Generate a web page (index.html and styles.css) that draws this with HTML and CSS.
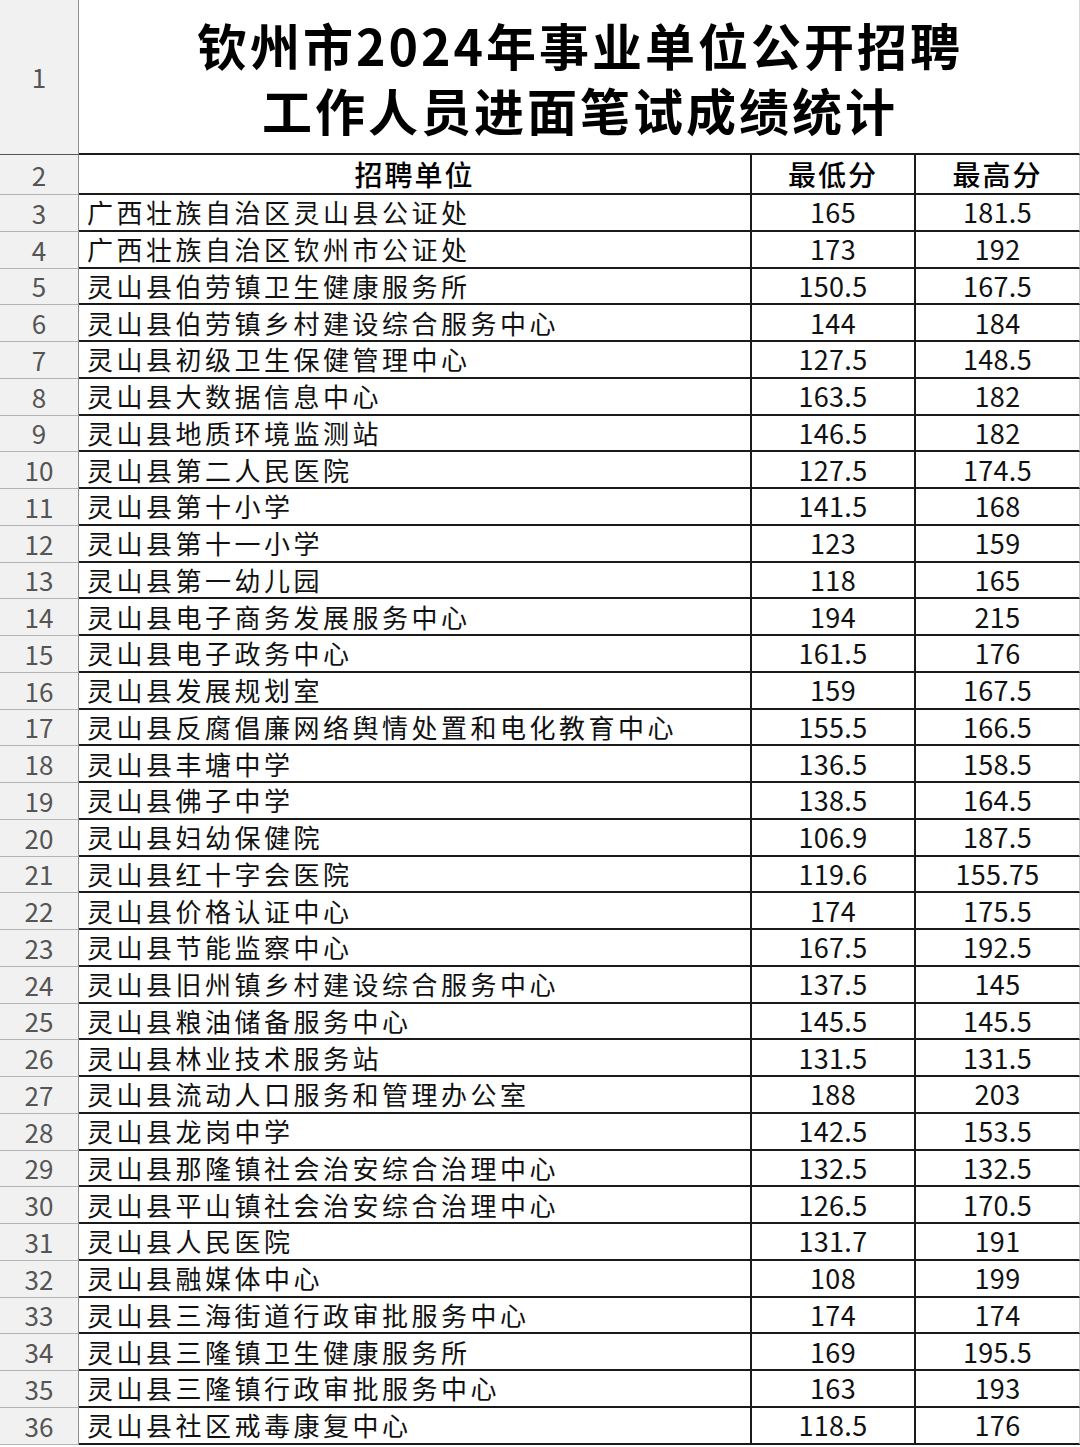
FILE: index.html
```html
<!DOCTYPE html>
<html lang="zh-CN">
<head>
<meta charset="utf-8">
<title>钦州市2024年事业单位公开招聘工作人员进面笔试成绩统计</title>
<link rel="stylesheet" href="styles.css">
</head>
<body>
<div class="sheet">
  <div class="rn rn-title">1</div>
  <div class="title">钦州市2024年事业单位公开招聘<br>工作人员进面笔试成绩统计</div>

  <div class="rn rn-head">2</div>
  <div class="hd name-h">招聘单位</div>
  <div class="hd">最低分</div>
  <div class="hd last">最高分</div>

  <div class="rn">3</div><div class="c name">广西壮族自治区灵山县公证处</div><div class="c num">165</div><div class="c num last">181.5</div>
  <div class="rn">4</div><div class="c name">广西壮族自治区钦州市公证处</div><div class="c num">173</div><div class="c num last">192</div>
  <div class="rn">5</div><div class="c name">灵山县伯劳镇卫生健康服务所</div><div class="c num">150.5</div><div class="c num last">167.5</div>
  <div class="rn">6</div><div class="c name">灵山县伯劳镇乡村建设综合服务中心</div><div class="c num">144</div><div class="c num last">184</div>
  <div class="rn">7</div><div class="c name">灵山县初级卫生保健管理中心</div><div class="c num">127.5</div><div class="c num last">148.5</div>
  <div class="rn">8</div><div class="c name">灵山县大数据信息中心</div><div class="c num">163.5</div><div class="c num last">182</div>
  <div class="rn">9</div><div class="c name">灵山县地质环境监测站</div><div class="c num">146.5</div><div class="c num last">182</div>
  <div class="rn">10</div><div class="c name">灵山县第二人民医院</div><div class="c num">127.5</div><div class="c num last">174.5</div>
  <div class="rn">11</div><div class="c name">灵山县第十小学</div><div class="c num">141.5</div><div class="c num last">168</div>
  <div class="rn">12</div><div class="c name">灵山县第十一小学</div><div class="c num">123</div><div class="c num last">159</div>
  <div class="rn">13</div><div class="c name">灵山县第一幼儿园</div><div class="c num">118</div><div class="c num last">165</div>
  <div class="rn">14</div><div class="c name">灵山县电子商务发展服务中心</div><div class="c num">194</div><div class="c num last">215</div>
  <div class="rn">15</div><div class="c name">灵山县电子政务中心</div><div class="c num">161.5</div><div class="c num last">176</div>
  <div class="rn">16</div><div class="c name">灵山县发展规划室</div><div class="c num">159</div><div class="c num last">167.5</div>
  <div class="rn">17</div><div class="c name">灵山县反腐倡廉网络舆情处置和电化教育中心</div><div class="c num">155.5</div><div class="c num last">166.5</div>
  <div class="rn">18</div><div class="c name">灵山县丰塘中学</div><div class="c num">136.5</div><div class="c num last">158.5</div>
  <div class="rn">19</div><div class="c name">灵山县佛子中学</div><div class="c num">138.5</div><div class="c num last">164.5</div>
  <div class="rn">20</div><div class="c name">灵山县妇幼保健院</div><div class="c num">106.9</div><div class="c num last">187.5</div>
  <div class="rn">21</div><div class="c name">灵山县红十字会医院</div><div class="c num">119.6</div><div class="c num last">155.75</div>
  <div class="rn">22</div><div class="c name">灵山县价格认证中心</div><div class="c num">174</div><div class="c num last">175.5</div>
  <div class="rn">23</div><div class="c name">灵山县节能监察中心</div><div class="c num">167.5</div><div class="c num last">192.5</div>
  <div class="rn">24</div><div class="c name">灵山县旧州镇乡村建设综合服务中心</div><div class="c num">137.5</div><div class="c num last">145</div>
  <div class="rn">25</div><div class="c name">灵山县粮油储备服务中心</div><div class="c num">145.5</div><div class="c num last">145.5</div>
  <div class="rn">26</div><div class="c name">灵山县林业技术服务站</div><div class="c num">131.5</div><div class="c num last">131.5</div>
  <div class="rn">27</div><div class="c name">灵山县流动人口服务和管理办公室</div><div class="c num">188</div><div class="c num last">203</div>
  <div class="rn">28</div><div class="c name">灵山县龙岗中学</div><div class="c num">142.5</div><div class="c num last">153.5</div>
  <div class="rn">29</div><div class="c name">灵山县那隆镇社会治安综合治理中心</div><div class="c num">132.5</div><div class="c num last">132.5</div>
  <div class="rn">30</div><div class="c name">灵山县平山镇社会治安综合治理中心</div><div class="c num">126.5</div><div class="c num last">170.5</div>
  <div class="rn">31</div><div class="c name">灵山县人民医院</div><div class="c num">131.7</div><div class="c num last">191</div>
  <div class="rn">32</div><div class="c name">灵山县融媒体中心</div><div class="c num">108</div><div class="c num last">199</div>
  <div class="rn">33</div><div class="c name">灵山县三海街道行政审批服务中心</div><div class="c num">174</div><div class="c num last">174</div>
  <div class="rn">34</div><div class="c name">灵山县三隆镇卫生健康服务所</div><div class="c num">169</div><div class="c num last">195.5</div>
  <div class="rn">35</div><div class="c name">灵山县三隆镇行政审批服务中心</div><div class="c num">163</div><div class="c num last">193</div>
  <div class="rn">36</div><div class="c name">灵山县社区戒毒康复中心</div><div class="c num">118.5</div><div class="c num last">176</div>
</div>
</body>
</html>
```

FILE: styles.css
```css
html, body {
  margin: 0;
  padding: 0;
  background: #ffffff;
}

body {
  font-family: "Noto Sans CJK SC", "Noto Sans", sans-serif;
  color: #111111;
}

.sheet {
  display: grid;
  width: 1080px;
  grid-template-columns: 79px 673px 164px 164px;
  grid-template-rows: 155px 40px;
  grid-auto-rows: 36.76px;
}

.rn {
  box-sizing: border-box;
  background: #f1f1f1;
  color: #555555;
  border-right: 1.5px solid #8e8e8e;
  border-bottom: 1px solid #b4b4b4;
  display: flex;
  align-items: center;
  justify-content: center;
  font-size: 26px;
  line-height: 30px;
}

.rn-title {
  border-bottom: 1.5px solid #555555;
}

.title {
  grid-column: 2 / 5;
  box-sizing: border-box;
  border-bottom: 2px solid #1a1a1a;
  border-right: 1px solid #d6d6d6;
  display: flex;
  align-items: center;
  justify-content: center;
  text-align: center;
  font-size: 50px;
  font-weight: 700;
  letter-spacing: 3px;
  line-height: 65px;
  color: #000000;
  padding-left: 2px;
}

.hd,
.c {
  box-sizing: border-box;
  border-right: 2px solid #1a1a1a;
  border-bottom: 2px solid #1a1a1a;
  display: flex;
  align-items: center;
  line-height: 32px;
  white-space: nowrap;
}

.hd {
  justify-content: center;
  font-size: 28px;
  font-weight: 500;
  letter-spacing: 2px;
  color: #000000;
}

.c.name {
  padding-left: 8px;
  font-size: 26px;
  letter-spacing: 3.5px;
}

.c.num {
  justify-content: center;
  font-size: 27px;
  letter-spacing: 0.3px;
}

.last {
  border-right: 1px solid #c8c8c8;
}
```
